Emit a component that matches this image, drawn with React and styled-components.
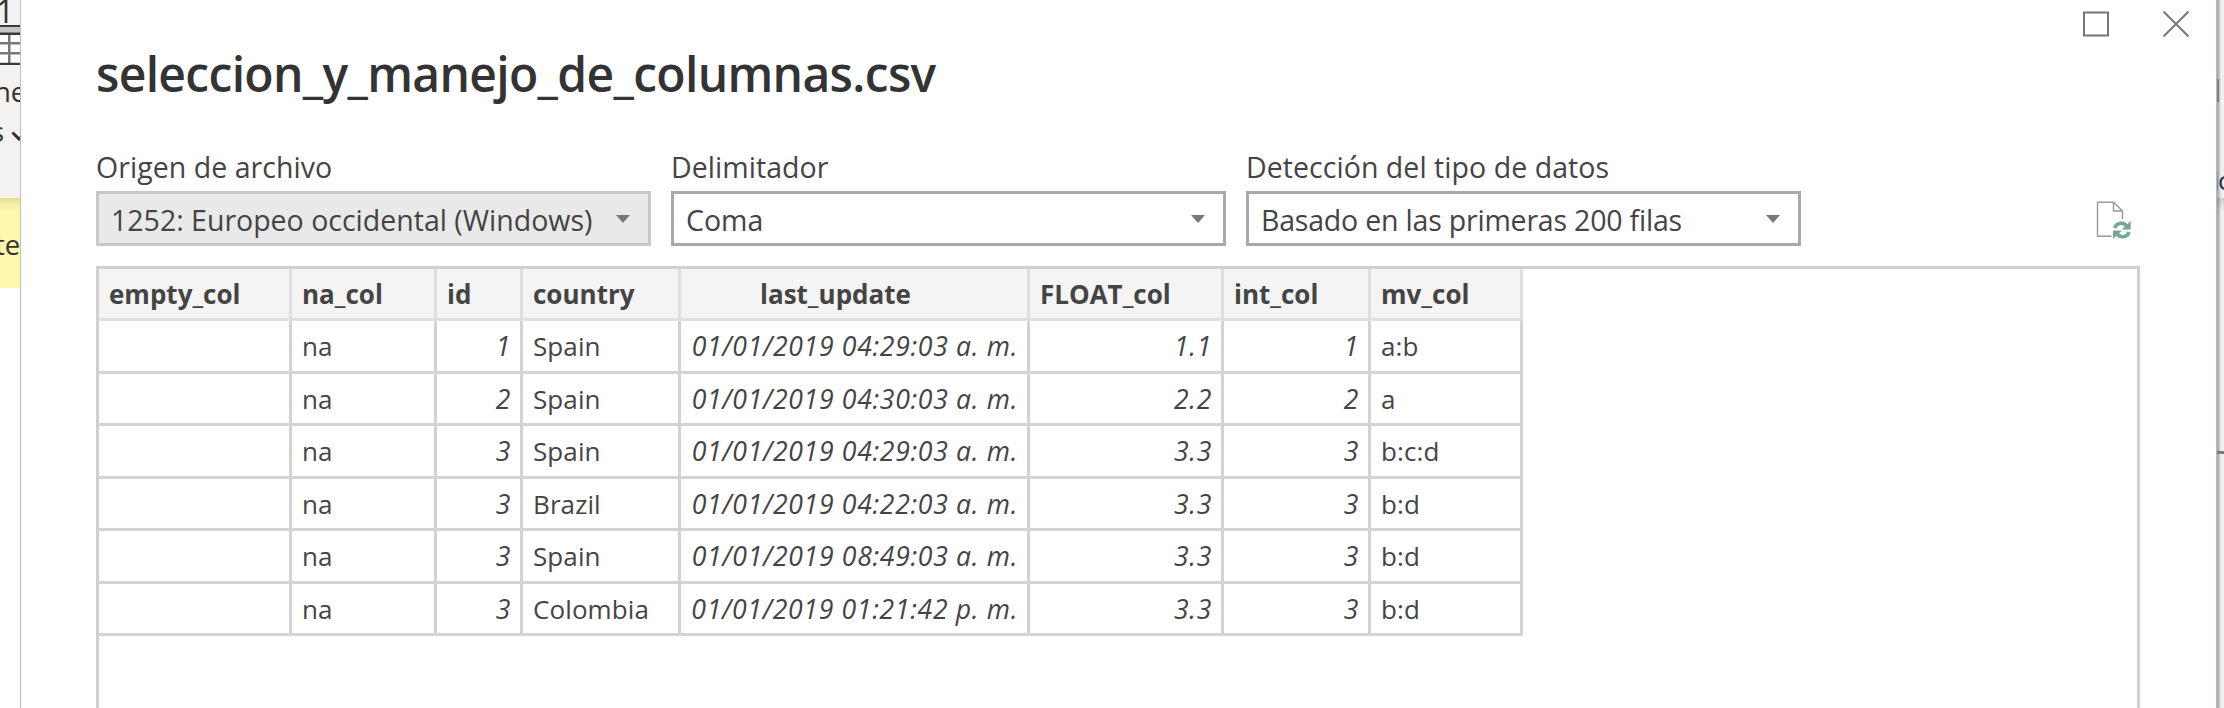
import React from "react";
import styled, { createGlobalStyle } from "styled-components";

const GlobalStyle = createGlobalStyle`
  * { box-sizing: border-box; }
  body {
    margin: 0;
    background: #fff;
    color: #444;
    font-family: "Open Sans", "Noto Sans", sans-serif;
    overflow: hidden;
  }
`;

const Screen = styled.div`
  display: flex;
  width: 2224px;
  height: 708px;
  overflow: hidden;
`;

/* Slivers of the application behind the dialog */
const LeftSliver = styled.div`
  flex: 0 0 20px;
  display: flex;
  flex-direction: column;
  overflow: hidden;
  color: #333;
`;

const RibbonEdge = styled.div`
  height: 198px;
  flex: none;
  background: #f3f2f1;
  overflow: hidden;
`;

const RibbonNumber = styled.div`
  height: 25px;
  margin-left: -4px;
  font-size: 32px;
  line-height: 21px;
`;

const TableGlyph = styled.svg`
  display: block;
  width: 20px;
  height: 40px;
`;

const ClippedText = styled.div`
  display: flex;
  align-items: center;
  white-space: nowrap;
  font-size: 27.5px;
  height: 38px;
  line-height: 38px;
  margin-left: ${(p) => p.$shift}px;
  margin-top: ${(p) => p.$top || 0}px;
`;

const RibbonChevron = styled.svg`
  flex: none;
  width: 16px;
  height: 10px;
  margin: 7px 0 0 7px;
`;

const NoticeEdge = styled.div`
  height: 90px;
  flex: none;
  overflow: hidden;
  background: linear-gradient(#e3dc98, #f6eea5 6px, #fff7ab 14px);
`;

const RightSliver = styled.div`
  flex: 0 0 7px;
  display: flex;
  flex-direction: column;
  overflow: hidden;
  background: linear-gradient(90deg, #aaa 0 1px, #b4b4b4 1px 2px, #cfcdcc 2px 3px, #e2e1e0 3px 4px, #f1f0ef 4px);
`;

const SliverTop = styled.div`
  flex: none;
  height: 198px;
  padding-top: 79px;
`;

const SliverMark = styled.div`
  width: 3px;
  height: 23px;
  background: linear-gradient(90deg, #8d7c72 0 2px, #a9cbdc 2px);
`;

const SliverText = styled.div`
  margin: 60px 0 0 -4px;
  height: 36px;
  line-height: 36px;
  font-size: 26px;
  letter-spacing: -1.5px;
  white-space: nowrap;
  color: #1f2f4c;
`;

const SliverInitial = styled.span`
  color: #3f78ad;
`;

const SliverBody = styled.div`
  flex: none;
  height: 256px;
  border-bottom: 3px solid #7c7c7c;
  background: linear-gradient(rgba(0, 0, 0, 0.14), transparent 14px);
`;

const Dialog = styled.main`
  flex: 1;
  min-width: 0;
  display: flex;
  flex-direction: column;
  background: #fff;
  border-left: 1px solid #bdbdbd;
  border-right: 1px solid #bbb;
`;

const DialogHeader = styled.header`
  display: flex;
  justify-content: space-between;
  align-items: flex-start;
  padding: 0 27px 0 75px;
  height: 149px;
`;

const Title = styled.h1`
  margin: 42px 0 0;
  font-size: 48px;
  font-weight: 600;
  line-height: 64px;
  letter-spacing: -0.68px;
  color: #333;
`;

const WindowControls = styled.div`
  display: flex;
  gap: 54px;
  padding-top: 11px;
`;

const ControlIcon = styled.svg`
  display: block;
  width: 26px;
  height: 26px;
  fill: none;
  stroke: #777;
  stroke-width: 2;
`;

const Options = styled.section`
  display: flex;
  align-items: flex-start;
  gap: 20px;
  padding: 0 76px 0 75px;
`;

const Field = styled.div`
  width: 555px;
`;

const Label = styled.div`
  height: 42px;
  line-height: 36px;
  font-size: 28.5px;
  letter-spacing: 0.05px;
`;

const Select = styled.div`
  display: flex;
  justify-content: space-between;
  height: 55px;
  padding: 0 18px 0 12px;
  border: 3px solid ${(p) => (p.$muted ? "#c8c8c8" : "#a9a9a9")};
  background: ${(p) => (p.$muted ? "#e9e9e9" : "#fff")};
  font-size: 28.5px;
  line-height: 52px;
  letter-spacing: ${(p) => p.$track || 0}px;
`;

const Caret = styled.svg`
  width: 14px;
  height: 8px;
  margin-top: 21px;
  fill: #777;
`;

const RefreshFileIcon = styled.svg`
  width: 36px;
  height: 40px;
  margin: 51px 9px 0 auto;
`;

const Preview = styled.section`
  flex: 1;
  margin: 20px 76px 0 75px;
  border: 3px solid #d0d0d0;
  border-bottom: 0;
`;

const DataGrid = styled.div`
  display: grid;
  grid-template-columns: 193px 145px 86px 158px 349px 194px 147px 152px;
  grid-template-rows: 52px 53px 52px 53px 52px 53px 52px;
  width: max-content;
`;

const HeaderCell = styled.div`
  padding: 1px 0 0 ${(p) => p.$indent || 10}px;
  border: solid #dfdfdf;
  border-width: 0 3px 3px 0;
  background: #f4f4f4;
  font-size: 26px;
  font-weight: 700;
  line-height: 49px;
  white-space: nowrap;
`;

const Cell = styled.div`
  padding: 0 9px 0 10px;
  border: solid #d3d3d3;
  border-width: 0 3px 3px 0;
  font-size: ${(p) => (p.$typed ? 26.6 : 26)}px;
  font-style: ${(p) => (p.$typed ? "italic" : "normal")};
  text-align: ${(p) => (p.$typed ? "right" : "left")};
  letter-spacing: ${(p) => (p.$typed ? 0.68 : 0.1)}px;
  line-height: 50px;
  white-space: nowrap;
`;

const columns = [
  { name: "empty_col" },
  { name: "na_col" },
  { name: "id", typed: true },
  { name: "country" },
  { name: "last_update", typed: true, indent: 79 },
  { name: "FLOAT_col", typed: true },
  { name: "int_col", typed: true },
  { name: "mv_col" },
];

const rows = [
  ["", "na", "1", "Spain", "01/01/2019 04:29:03 a. m.", "1.1", "1", "a:b"],
  ["", "na", "2", "Spain", "01/01/2019 04:30:03 a. m.", "2.2", "2", "a"],
  ["", "na", "3", "Spain", "01/01/2019 04:29:03 a. m.", "3.3", "3", "b:c:d"],
  ["", "na", "3", "Brazil", "01/01/2019 04:22:03 a. m.", "3.3", "3", "b:d"],
  ["", "na", "3", "Spain", "01/01/2019 08:49:03 a. m.", "3.3", "3", "b:d"],
  ["", "na", "3", "Colombia", "01/01/2019 01:21:42 p. m.", "3.3", "3", "b:d"],
];

const options = [
  { label: "Origen de archivo", value: "1252: Europeo occidental (Windows)", muted: true },
  { label: "Delimitador", value: "Coma" },
  { label: "Detección del tipo de datos", value: "Basado en las primeras 200 filas", track: -0.2 },
];

export default function App() {
  return (
    <Screen>
      <GlobalStyle />
      <LeftSliver>
        <RibbonEdge>
          <RibbonNumber>1</RibbonNumber>
          <TableGlyph viewBox="0 0 20 40">
            <path fill="#fff" d="M0 9h20v29H0z" />
            <path fill="#c6c6c6" d="M0 2h20v6H0z" />
            <path fill="#777" d="M8 10h2.5v28H8zM0 17h20v2.5H0zM0 27h20v2.5H0z" />
            <path fill="#3a3a3a" d="M0 0h20v2H0zM0 7.500h20v2.500H0zM0 37.800h20v2.200H0z" />
          </TableGlyph>
          <ClippedText $shift={-6} $top={8}>ne</ClippedText>
          <ClippedText $shift={-9} $top={2}>
            s
            <RibbonChevron viewBox="0 0 16 10">
              <path d="M1.500 1.500 8 8l6.500-6.500" fill="none" stroke="#333" strokeWidth="3" />
            </RibbonChevron>
          </ClippedText>
        </RibbonEdge>
        <NoticeEdge>
          <ClippedText $shift={-5} $top={28}>te</ClippedText>
        </NoticeEdge>
      </LeftSliver>

      <Dialog>
        <DialogHeader>
          <Title>seleccion_y_manejo_de_columnas.csv</Title>
          <WindowControls>
            <ControlIcon viewBox="0 0 26 26">
              <path d="M1 1.500h24v23H1z" />
            </ControlIcon>
            <ControlIcon viewBox="0 0 26 26">
              <path d="M.5.500l25 25M25.500.500l-25 25" />
            </ControlIcon>
          </WindowControls>
        </DialogHeader>

        <Options>
          {options.map((o) => (
            <Field key={o.label}>
              <Label>{o.label}</Label>
              <Select $muted={o.muted} $track={o.track}>
                {o.value}
                <Caret viewBox="0 0 14 8">
                  <path d="M0 0h14L7 8z" />
                </Caret>
              </Select>
            </Field>
          ))}
          <RefreshFileIcon viewBox="0 0 36 40">
            <path
              d="M16.500 36.200H2.500V2.200h16L27.500 11v8M18.500 2.200V11h9"
              fill="none"
              stroke="#999"
              strokeWidth="1.400"
            />
            <g fill="none" stroke="#74a794" strokeWidth="3.600">
              <path d="M19.800 28c1.500-5.500 9-6.500 12.200-1.500" />
              <path d="M34 32c-1.500 5.500-9 6.500-12.200 1.500" />
            </g>
            <path fill="#74a794" d="M35.700 21v8.400h-9zM18 39v-8.400h9z" />
          </RefreshFileIcon>
        </Options>

        <Preview>
          <DataGrid>
            {columns.map((c) => (
              <HeaderCell key={c.name} $indent={c.indent}>
                {c.name}
              </HeaderCell>
            ))}
            {rows.map((row, r) =>
              row.map((value, i) => (
                <Cell key={`${r}-${columns[i].name}`} $typed={columns[i].typed}>
                  {value}
                </Cell>
              ))
            )}
          </DataGrid>
        </Preview>
      </Dialog>

      <RightSliver>
        <SliverTop>
          <SliverMark />
          <SliverText>
            <SliverInitial>i</SliverInitial>c
          </SliverText>
        </SliverTop>
        <SliverBody />
      </RightSliver>
    </Screen>
  );
}
